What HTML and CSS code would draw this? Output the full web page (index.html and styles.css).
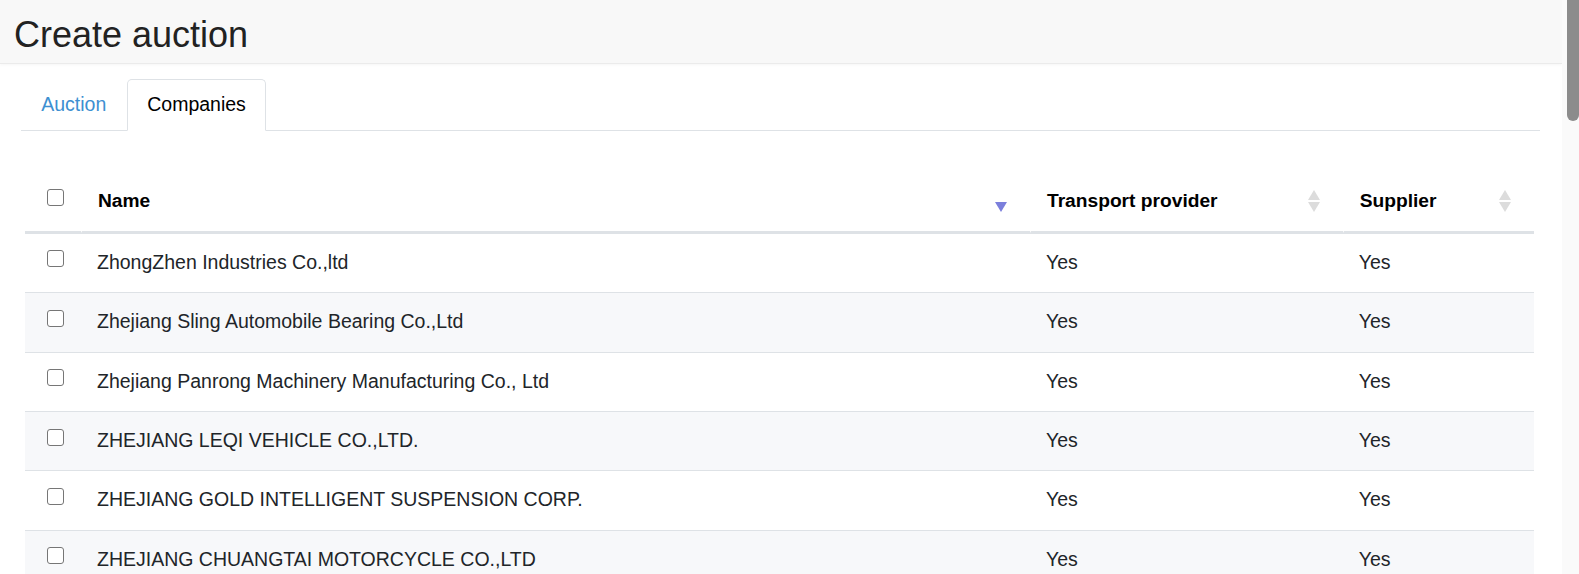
FILE: index.html
```html
<!DOCTYPE html>
<html lang="en">
<head>
<meta charset="utf-8">
<title>Create auction</title>
<link rel="stylesheet" href="styles.css">
</head>
<body>
<div class="app">
  <div class="main">
    <header class="page-header">
      <h1 class="page-title">Create auction</h1>
    </header>
    <div class="content">
      <ul class="tabs">
        <li><a class="tab-link" href="#">Auction</a></li>
        <li><a class="tab-link active" href="#">Companies</a></li>
      </ul>
      <div class="tab-content">
        <table class="grid">
          <colgroup>
            <col class="c-check">
            <col class="c-name">
            <col class="c-transport">
            <col class="c-supplier">
          </colgroup>
          <thead>
            <tr>
              <th class="check-cell"><input type="checkbox" class="cb"></th>
              <th>
                <div class="th-inner">
                  <span>Name</span>
                  <svg class="sort" width="12" height="22" viewBox="0 0 12 22"><path class="sort-down active-sort" d="M0 12 H12 L6 22 Z"/></svg>
                </div>
              </th>
              <th>
                <div class="th-inner">
                  <span>Transport provider</span>
                  <svg class="sort" width="12" height="22" viewBox="0 0 12 22"><path d="M6 0 L12 10 H0 Z"/><path d="M0 12 H12 L6 22 Z"/></svg>
                </div>
              </th>
              <th>
                <div class="th-inner">
                  <span>Supplier</span>
                  <svg class="sort" width="12" height="22" viewBox="0 0 12 22"><path d="M6 0 L12 10 H0 Z"/><path d="M0 12 H12 L6 22 Z"/></svg>
                </div>
              </th>
            </tr>
          </thead>
          <tbody>
            <tr>
              <td class="check-cell"><input type="checkbox" class="cb"></td>
              <td>ZhongZhen Industries Co.,ltd</td>
              <td>Yes</td>
              <td>Yes</td>
            </tr>
            <tr>
              <td class="check-cell"><input type="checkbox" class="cb"></td>
              <td>Zhejiang Sling Automobile Bearing Co.,Ltd</td>
              <td>Yes</td>
              <td>Yes</td>
            </tr>
            <tr>
              <td class="check-cell"><input type="checkbox" class="cb"></td>
              <td>Zhejiang Panrong Machinery Manufacturing Co., Ltd</td>
              <td>Yes</td>
              <td>Yes</td>
            </tr>
            <tr>
              <td class="check-cell"><input type="checkbox" class="cb"></td>
              <td>ZHEJIANG LEQI VEHICLE CO.,LTD.</td>
              <td>Yes</td>
              <td>Yes</td>
            </tr>
            <tr>
              <td class="check-cell"><input type="checkbox" class="cb"></td>
              <td>ZHEJIANG GOLD INTELLIGENT SUSPENSION CORP.</td>
              <td>Yes</td>
              <td>Yes</td>
            </tr>
            <tr>
              <td class="check-cell"><input type="checkbox" class="cb"></td>
              <td>ZHEJIANG CHUANGTAI MOTORCYCLE CO.,LTD</td>
              <td>Yes</td>
              <td>Yes</td>
            </tr>
          </tbody>
        </table>
      </div>
    </div>
  </div>
  <div class="scrollbar"><div class="thumb"></div></div>
</div>
</body>
</html>
```

FILE: styles.css
```css
html, body {
  margin: 0;
  padding: 0;
  height: 100%;
  overflow: hidden;
  background: #fff;
}

body {
  font-family: "Liberation Sans", Arial, sans-serif;
  font-size: 19.2px;
  line-height: 28.8px;
  color: #212529;
}

.app {
  display: flex;
  height: 100%;
}

.main {
  flex: 1;
  min-width: 0;
  overflow: hidden;
}

.page-header {
  background: #f8f8f8;
  border-bottom: 1px solid #ebebeb;
  box-shadow: 0 1px 3px rgba(0, 0, 0, 0.04);
  padding: 13px 14px 7px;
}

.page-title {
  margin: 0;
  font-size: 36px;
  line-height: 43.2px;
  font-weight: 400;
  color: #222;
}

.content {
  padding: 15px 22px 0 20.6px;
}

.tabs {
  list-style: none;
  margin: 0;
  padding: 0;
  display: flex;
  border-bottom: 1px solid #dee2e6;
}

.tabs li {
  margin-bottom: -1px;
}

.tab-link {
  display: block;
  padding: 10px 19.4px 11.2px 19.6px;
  font-size: 19.5px;
  border: 1px solid transparent;
  border-radius: 5px 5px 0 0;
  color: #3d8fd1;
  text-decoration: none;
}

.tab-link.active {
  color: #000;
  background: #fff;
  border-color: #dee2e6 #dee2e6 #fff;
}

.tab-content {
  padding: 41px 6px 0 4.4px;
}

.grid {
  width: 100%;
  table-layout: fixed;
  border-collapse: separate;
  border-spacing: 0;
}

.c-check { width: 56px; }
.c-name { width: 949px; }
.c-transport { width: 312.7px; }
.c-supplier { width: auto; }

.grid th {
  text-align: left;
  font-weight: 700;
  color: #000;
  padding: 14.4px 23px 15.4px 16px;
  border-bottom: 2px solid #dee2e6;
  vertical-align: top;
}

.grid th + th {
  border-left: 1px solid #fff;
}

.th-inner {
  display: flex;
  align-items: center;
  justify-content: space-between;
}

.sort {
  display: block;
  fill: #dcdcdc;
}

.sort .active-sort {
  fill: #7b7fdc;
}

.grid td {
  padding: 14px 14px 15.6px 16px;
  font-size: 19.5px;
  border-top: 1px solid #dee2e6;
  vertical-align: top;
  white-space: nowrap;
}

.grid tbody tr:nth-child(even) td {
  background: #f7f8fa;
}

.grid .check-cell {
  padding-left: 22px;
  padding-right: 0;
}

.cb {
  appearance: none;
  -webkit-appearance: none;
  display: block;
  width: 17px;
  height: 17px;
  margin: 2.6px 0 0 0;
  border: 1.3px solid #767676;
  border-radius: 3px;
  background: #fff;
  box-sizing: border-box;
}

.scrollbar {
  width: 17px;
  flex: none;
  background: #fafafa;
  display: flex;
  justify-content: flex-end;
  align-items: flex-start;
}

.thumb {
  width: 12.5px;
  height: 121px;
  background: #8c8c8c;
  border-radius: 0 0 6px 6px;
}
```
